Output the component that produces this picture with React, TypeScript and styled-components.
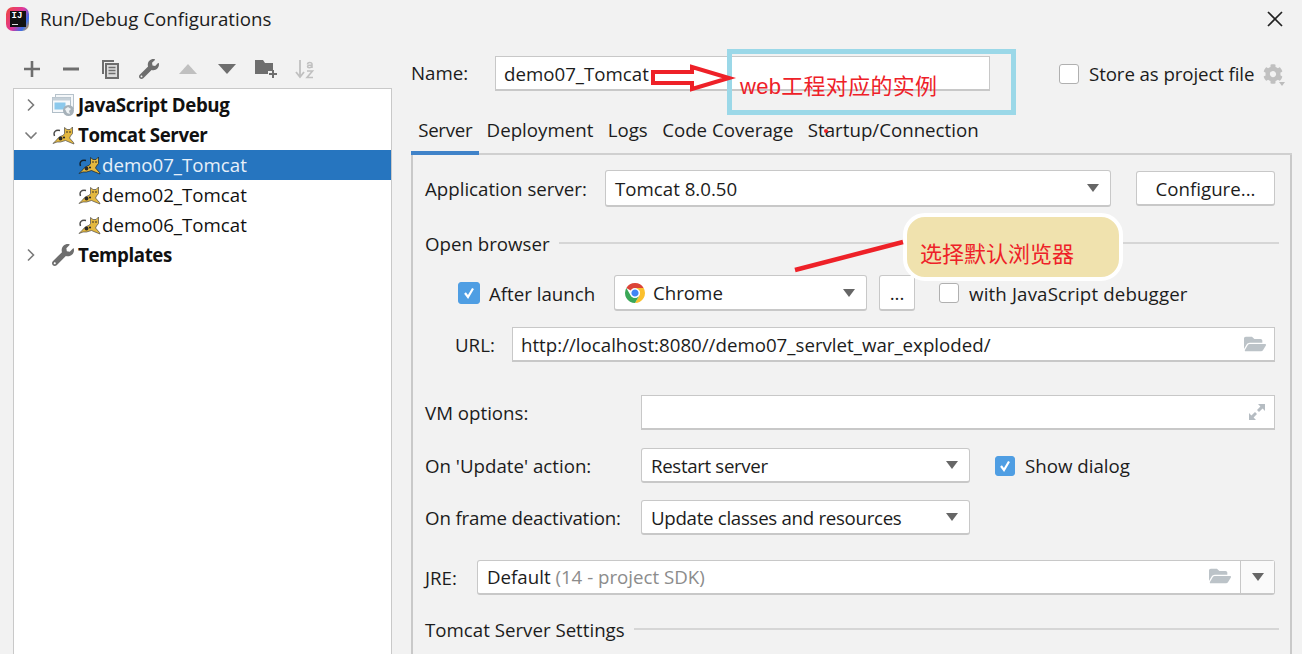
import React from "react";
import styled, { createGlobalStyle } from "styled-components";
import { FaWrench, FaCog, FaFolderOpen } from "react-icons/fa";

const Global = createGlobalStyle`
  html, body { margin: 0; padding: 0; background: #f2f2f2; }
  body { font-family: "Open Sans", "Noto Sans CJK SC", sans-serif; color: #1c1c1c; }
`;

const Dialog = styled.div`
  position: relative;
  width: 1302px;
  height: 654px;
  overflow: hidden;
  background: #f2f2f2;
  font-size: 18.7px;
`;
const TitleBar = styled.div`
  height: 38px;
  display: flex;
  align-items: center;
  padding: 0 19px 0 6px;
  box-sizing: border-box;
`;
const Logo = styled.div`
  width: 23px;
  height: 24px;
  border-radius: 7px;
  background: linear-gradient(120deg, #f04a3a 0%, #e0359a 50%, #3a6fe8 78%, #f5a623 100%);
  display: flex;
  align-items: center;
  justify-content: center;
`;
const LogoInner = styled.div`
  width: 16px;
  height: 16px;
  background: #111;
  color: #fff;
  font: bold 9px/11px "Liberation Mono", monospace;
  padding-left: 2px;
  box-sizing: border-box;
  position: relative;
  &::after {
    content: "";
    position: absolute;
    left: 2px;
    bottom: 2px;
    width: 6px;
    height: 1px;
    background: #ddd;
  }
`;
const Title = styled.div`
  margin-left: 11px;
  flex: 1;
  position: relative;
  top: -1px;
`;
const Main = styled.div`
  display: flex;
  height: 616px;
`;
const Sidebar = styled.div`
  width: 392px;
  padding-left: 13px;
  box-sizing: border-box;
  display: flex;
  flex-direction: column;
  flex: none;
`;
const Toolbar = styled.div`
  height: 32px;
  margin: 15px 0 3px -1px;
  display: flex;
  align-items: center;
  color: #6e6e6e;
`;
const ToolIcon = styled.span<{ $dim?: boolean }>`
  width: 39px;
  display: flex;
  justify-content: center;
  align-items: center;
  color: ${(p) => (p.$dim ? "#c0c0c0" : "#6e6e6e")};
  flex: none;
`;
const Tree = styled.div`
  flex: 1;
  background: #fff;
  border: 1px solid #c9c9c9;
  border-bottom: none;
  padding-top: 1px;
`;
const TreeRow = styled.div<{ $indent: number; $selected?: boolean; $bold?: boolean }>`
  height: 30px;
  box-sizing: border-box;
  padding-bottom: 1px;
  display: flex;
  align-items: center;
  padding-left: ${(p) => p.$indent}px;
  background: ${(p) => (p.$selected ? "#2675bf" : "transparent")};
  color: ${(p) => (p.$selected ? "#e6f0fa" : "#111")};
  font-weight: ${(p) => (p.$bold ? 700 : 400)};
  letter-spacing: ${(p) => (p.$bold ? "-0.4px" : "0")};
`;
const Twisty = styled.span`
  width: 29px;
  flex: none;
  display: flex;
`;
const RowIcon = styled.span<{ $w: number }>`
  width: ${(p) => p.$w}px;
  flex: none;
  display: flex;
  align-items: center;
`;
const Right = styled.div`
  flex: 1;
  padding: 18px 10px 0 19px;
  min-width: 0;
`;
const NameRow = styled.div`
  display: flex;
  align-items: center;
  height: 35px;
`;
const NameLabel = styled.div`
  width: 84px;
  padding-bottom: 2px;
  box-sizing: border-box;
`;
const TextField = styled.div<{ $w?: number }>`
  height: 100%;
  box-sizing: border-box;
  ${(p) => (p.$w ? `width: ${p.$w}px; flex: none;` : "flex: 1;")}
  background: #fff;
  border: 1px solid #c8c8c8;
  border-bottom: 2px solid #c8c8c8;
  padding: 0 8px;
  display: flex;
  align-items: center;
  justify-content: space-between;
  color: #1c1c1c;
`;
const Check = styled.span<{ $on?: boolean; $size?: number }>`
  width: ${(p) => p.$size ?? 20}px;
  height: ${(p) => p.$size ?? 20}px;
  flex: none;
  box-sizing: border-box;
  border-radius: 3px;
  background: ${(p) => (p.$on ? "#4f9ee3" : "#fff")};
  border: 1px solid ${(p) => (p.$on ? "#4f9ee3" : "#b0b0b0")};
  display: flex;
  align-items: center;
  justify-content: center;
`;
const CheckLabel = styled.label<{ $left: number; $gap: number; $spacing?: number }>`
  display: flex;
  align-items: center;
  gap: ${(p) => p.$gap}px;
  margin-left: ${(p) => p.$left}px;
  letter-spacing: ${(p) => p.$spacing ?? 0}px;
  white-space: nowrap;
`;
const GearWrap = styled.span`
  margin-left: 9px;
  color: #c0c0c0;
  display: flex;
  position: relative;
`;
const GearCaret = styled.span`
  position: absolute;
  right: -2px;
  bottom: -2px;
  width: 0;
  height: 0;
  border-left: 3px solid transparent;
  border-right: 3px solid transparent;
  border-top: 4px solid #bcbcbc;
`;
const Tabs = styled.div`
  margin-top: 19px;
  height: 45px;
  display: flex;
  box-sizing: border-box;
  border-bottom: 2px solid #d0d0d0;
`;
const Tab = styled.div<{ $active?: boolean }>`
  padding: 0 7.2px;
  height: 45px;
  box-sizing: border-box;
  line-height: 40px;
  border-bottom: 4px solid ${(p) => (p.$active ? "#4083c9" : "transparent")};
  letter-spacing: ${(p) => (p.$active ? "-0.3px" : "0")};
  white-space: nowrap;
`;
const Panel = styled.div`
  border-left: 2px solid #c9c9c9;
  border-right: 2px solid #c9c9c9;
  padding: 15px 15px 0 12px;
  height: 520px;
  box-sizing: border-box;
`;
const Row = styled.div<{ $top: number; $h: number; $pad?: number }>`
  display: flex;
  align-items: center;
  margin-top: ${(p) => p.$top}px;
  height: ${(p) => p.$h}px;
  padding-left: ${(p) => p.$pad ?? 0}px;
`;
const FieldLabel = styled.div<{ $w: number; $left?: number; $spacing?: number }>`
  width: ${(p) => p.$w}px;
  margin-left: ${(p) => p.$left ?? 0}px;
  letter-spacing: ${(p) => p.$spacing ?? 0}px;
  flex: none;
  white-space: nowrap;
`;
const Select = styled.div<{ $w?: number }>`
  height: 100%;
  box-sizing: border-box;
  ${(p) => (p.$w ? `width: ${p.$w}px; flex: none;` : "flex: 1;")}
  background: #fff;
  border: 1px solid #c8c8c8;
  border-bottom: 2px solid #c8c8c8;
  border-radius: 3px;
  padding: 0 11px 0 9px;
  display: flex;
  align-items: center;
  justify-content: space-between;
`;
const SelectText = styled.span<{ $spacing?: number }>`
  display: flex;
  align-items: center;
  gap: 7px;
  letter-spacing: ${(p) => p.$spacing ?? 0}px;
  white-space: nowrap;
`;
const Caret = styled.span`
  width: 0;
  height: 0;
  border-left: 6px solid transparent;
  border-right: 6px solid transparent;
  border-top: 8px solid #666;
`;
const Button = styled.div<{ $w: number; $left: number; $h?: number }>`
  width: ${(p) => p.$w}px;
  height: ${(p) => p.$h ?? 100}%;
  flex: none;
  margin-left: ${(p) => p.$left}px;
  box-sizing: border-box;
  background: #fff;
  border: 1px solid #c8c8c8;
  border-bottom: 2px solid #c8c8c8;
  border-radius: 3px;
  display: flex;
  align-items: center;
  justify-content: center;
`;
const Separator = styled.div`
  flex: 1;
  height: 2px;
  background: #d6d6d6;
  margin: 0 -4px 0 9px;
`;
const Muted = styled.span`
  color: #8c8c8c;
`;
const JreField = styled.div`
  flex: 1;
  height: 100%;
  display: flex;
  box-sizing: border-box;
  background: #fff;
  border: 1px solid #c8c8c8;
  border-bottom: 2px solid #c8c8c8;
  border-radius: 3px;
`;
const JreMain = styled.div`
  flex: 1;
  padding: 0 9px;
  display: flex;
  align-items: center;
  justify-content: space-between;
  position: relative;
  top: -1px;
`;
const JreArrow = styled.div`
  width: 33px;
  border-left: 1px solid #c8c8c8;
  background: #fafafa;
  display: flex;
  align-items: center;
  justify-content: center;
`;
const Overlay = styled.div`
  position: absolute;
  inset: 0;
  pointer-events: none;
`;
const BlueBox = styled.div`
  position: absolute;
  left: 727px;
  top: 49px;
  width: 289px;
  height: 66px;
  box-sizing: border-box;
  border: 5px solid #9bd8e8;
`;
const RedNote = styled.div`
  position: absolute;
  font-family: "Liberation Sans", "Noto Sans CJK SC", sans-serif;
  font-size: 22px;
  line-height: 28px;
  color: #ee2128;
  white-space: nowrap;
`;
const WebNote = styled(RedNote)`
  left: 740px;
  top: 73px;
  letter-spacing: 0.3px;
`;
const Bubble = styled.div`
  position: absolute;
  left: 903px;
  top: 213px;
  width: 220px;
  height: 68px;
  box-sizing: border-box;
  background: #f0e2ae;
  border: 4px solid #fff;
  border-radius: 22px;
`;
const BrowserNote = styled(RedNote)`
  left: 920px;
  top: 241px;
`;
const Drawing = styled.svg`
  position: absolute;
  left: 0;
  top: 0;
`;

const Chevron = ({ open }: { open?: boolean }) => (
  <svg width="16" height="16" viewBox="0 0 16 16" fill="none" stroke="#7a7a7a" strokeWidth="1.6">
    {open ? <path d="M2.5 5.5 L8 11 L13.5 5.5" /> : <path d="M5 2.5 L10.5 8 L5 13.5" />}
  </svg>
);

const Tomcat = ({ dark }: { dark?: boolean }) => {
  const ink = dark ? "#12202c" : "#4a4a4a";
  return (
    <svg width="23" height="20" viewBox="0 0 23 20">
      <path d="M2.5 11 C1 7 3.5 4.5 8 5.5" fill="none" stroke={ink} strokeWidth="1.4" />
      <path
        d="M1 18.5 L4.5 15 C6 12.5 8.5 11 11 10.5 L12.5 8.5 L12.5 2.5 L15 4.5 L18 4.5 L20.5 2 L20.5 8.5 L18.5 11 L17.5 13 L21.5 17.5 L22 19 L17 17 L13.5 15.5 L8.5 17 L5 17 Z"
        fill="#e4b83f"
        stroke={ink}
        strokeWidth="0.7"
      />
      <circle cx="15" cy="7" r="0.8" fill="#222" />
      <circle cx="18" cy="7" r="0.8" fill="#222" />
      <circle cx="8.5" cy="13.5" r="1.9" fill="#2a2a2a" />
      <circle cx="12" cy="12.5" r="1.1" fill="#2a2a2a" />
    </svg>
  );
};

const JsDebug = () => (
  <svg width="22" height="22" viewBox="0 0 22 22">
    <rect x="3.5" y="0.5" width="18" height="14" fill="#f4f7f9" stroke="#b6c2cb" />
    <rect x="0.5" y="3.5" width="18" height="15" fill="#f7f9fb" stroke="#b0bec8" />
    <rect x="0.5" y="3.5" width="18" height="3" fill="#c5d0d8" />
    <rect x="2.5" y="8.5" width="11" height="7" fill="#8cc9ec" />
    <circle cx="16.5" cy="16.5" r="5.5" fill="#a6b1b9" />
    <path d="M13 15 L16 13 L19 15 L17 17 L18 20 L15 19 Z" fill="#eef2f4" />
  </svg>
);

const Copy = () => (
  <svg width="18" height="20" viewBox="0 0 18 20">
    <path d="M1 1 H13 V3 H3 V15 H1 Z" fill="#6e6e6e" />
    <path d="M5 5 H17 V19 H5 Z" fill="#dcdcdc" stroke="#6e6e6e" strokeWidth="2" />
    <path d="M7.5 8.5 H14.5 M7.5 11.5 H14.5 M7.5 14.5 H14.5" stroke="#6e6e6e" strokeWidth="1.6" />
  </svg>
);

const Chrome = () => (
  <svg width="22" height="22" viewBox="0 0 22 22">
    <path d="M11 1 A10 10 0 0 1 19.66 6 L11 6 A5 5 0 0 0 6.67 8.5 L2.34 6 A10 10 0 0 1 11 1 Z" fill="#db4437" />
    <path d="M19.66 6 A10 10 0 0 1 11 21 L15.33 13.5 A5 5 0 0 0 15.33 8.5 Z M15.33 8.5 L11 6 L19.66 6 Z" fill="#fbc02d" />
    <path d="M2.34 6 A10 10 0 0 0 11 21 L15.33 13.5 A5 5 0 0 1 6.67 13.5 Z" fill="#3aa757" />
    <circle cx="11" cy="11" r="4.2" fill="#4285f4" stroke="#fff" strokeWidth="1.2" />
  </svg>
);

const Tick = ({ size = 14 }: { size?: number }) => (
  <svg width={size} height={size} viewBox="0 0 14 14" fill="none" stroke="#fff" strokeWidth="2.2">
    <path d="M3 7 L6 11 L11 2.5" />
  </svg>
);

const Expand = () => (
  <svg width="18" height="18" viewBox="0 0 18 18" fill="#b5bcc2">
    <path d="M10 1 H17 V8 L14.6 5.6 L11 9 L9 7 L12.4 3.4 Z" />
    <path d="M1 10 L3.4 12.4 L7 9 L9 11 L5.6 14.6 L8 17 H1 Z" />
  </svg>
);

const tree = [
  { label: "JavaScript Debug", indent: 9, twisty: "closed", bold: true, icon: <JsDebug />, w: 26 },
  { label: "Tomcat Server", indent: 9, twisty: "open", bold: true, icon: <Tomcat />, w: 26 },
  { label: "demo07_Tomcat", indent: 64, selected: true, icon: <Tomcat dark />, w: 24 },
  { label: "demo02_Tomcat", indent: 64, icon: <Tomcat />, w: 24 },
  { label: "demo06_Tomcat", indent: 64, icon: <Tomcat />, w: 24 },
  { label: "Templates", indent: 9, twisty: "closed", bold: true, icon: <FaWrench size={22} color="#6e6e6e" />, w: 26 },
];

const tabs = ["Server", "Deployment", "Logs", "Code Coverage", "Startup/Connection"];

export default function App() {
  return (
    <Dialog>
      <Global />
      <TitleBar>
        <Logo>
          <LogoInner>IJ</LogoInner>
        </Logo>
        <Title>Run/Debug Configurations</Title>
        <svg width="16" height="16" viewBox="0 0 16 16" stroke="#222" strokeWidth="1.7">
          <path d="M1 1 L15 15 M15 1 L1 15" />
        </svg>
      </TitleBar>
      <Main>
        <Sidebar>
          <Toolbar>
            <ToolIcon>
              <svg width="16" height="16" viewBox="0 0 16 16" fill="#6e6e6e">
                <path d="M6.7 0 H9.3 V6.7 H16 V9.3 H9.3 V16 H6.7 V9.3 H0 V6.7 H6.7 Z" />
              </svg>
            </ToolIcon>
            <ToolIcon>
              <svg width="16" height="4" viewBox="0 0 16 4" fill="#6e6e6e">
                <rect width="16" height="3" y="0.5" />
              </svg>
            </ToolIcon>
            <ToolIcon>
              <Copy />
            </ToolIcon>
            <ToolIcon>
              <FaWrench size={20} />
            </ToolIcon>
            <ToolIcon $dim>
              <svg width="18" height="10" viewBox="0 0 18 10" fill="currentColor">
                <path d="M9 0 L18 10 H0 Z" />
              </svg>
            </ToolIcon>
            <ToolIcon>
              <svg width="18" height="10" viewBox="0 0 18 10" fill="currentColor">
                <path d="M0 0 H18 L9 10 Z" />
              </svg>
            </ToolIcon>
            <ToolIcon>
              <svg width="22" height="20" viewBox="0 0 22 20" fill="currentColor">
                <path d="M0 1 H8 L10 4 H18 V12 H13 V15 H0 Z" />
                <path d="M17 11 H19 V14 H22 V16 H19 V19 H17 V16 H14 V14 H17 Z" />
              </svg>
            </ToolIcon>
            <ToolIcon $dim>
              <svg width="20" height="20" viewBox="0 0 20 20" fill="none" stroke="currentColor" strokeWidth="1.8">
                <path d="M5 1 V17 M1 13 L5 18 L9 13" />
                <path d="M12.5 5.5 C12.5 3 17 3 17 5 V9 M17 6 C14 6 12.5 6.5 12.5 7.5 C12.5 9 16 9 17 7.5" strokeWidth="1.5" />
                <path d="M12 12 H17.5 L12 18.5 H18" strokeWidth="1.6" />
              </svg>
            </ToolIcon>
          </Toolbar>
          <Tree>
            {tree.map((n) => (
              <TreeRow key={n.label} $indent={n.indent} $selected={n.selected} $bold={n.bold}>
                {n.twisty && (
                  <Twisty>
                    <Chevron open={n.twisty === "open"} />
                  </Twisty>
                )}
                <RowIcon $w={n.w}>{n.icon}</RowIcon>
                {n.label}
              </TreeRow>
            ))}
          </Tree>
        </Sidebar>
        <Right>
          <NameRow>
            <NameLabel>Name:</NameLabel>
            <TextField $w={495}>demo07_Tomcat</TextField>
            <CheckLabel $left={69} $gap={10} $spacing={-0.1}>
              <Check />
              Store as project file
            </CheckLabel>
            <GearWrap>
              <FaCog size={20} />
              <GearCaret />
            </GearWrap>
          </NameRow>
          <Tabs>
            {tabs.map((t, i) => (
              <Tab key={t} $active={i === 0}>
                {t}
              </Tab>
            ))}
          </Tabs>
          <Panel>
            <Row $top={0} $h={37}>
              <FieldLabel $w={180}>Application server:</FieldLabel>
              <Select>
                <SelectText>Tomcat 8.0.50</SelectText>
                <Caret />
              </Select>
              <Button $w={139} $left={25} $h={92}>
                Configure...
              </Button>
            </Row>
            <Row $top={24} $h={24}>
              Open browser
              <Separator />
            </Row>
            <Row $top={20} $h={36} $pad={33}>
              <Check $on $size={22}>
                <Tick />
              </Check>
              <FieldLabel $w={125} $left={9}>
                After launch
              </FieldLabel>
              <Select $w={253}>
                <SelectText>
                  <Chrome />
                  Chrome
                </SelectText>
                <Caret />
              </Select>
              <Button $w={36} $left={12}>
                ...
              </Button>
              <CheckLabel $left={24} $gap={10} $spacing={0.15}>
                <Check />
                with JavaScript debugger
              </CheckLabel>
            </Row>
            <Row $top={16} $h={35} $pad={30}>
              <FieldLabel $w={57}>URL:</FieldLabel>
              <TextField>
                http://localhost:8080//demo07_servlet_war_exploded/
                <FaFolderOpen size={22} color="#bcc3c8" />
              </TextField>
            </Row>
            <Row $top={33} $h={35}>
              <FieldLabel $w={216}>VM options:</FieldLabel>
              <TextField>
                <span />
                <Expand />
              </TextField>
            </Row>
            <Row $top={18} $h={35}>
              <FieldLabel $w={216}>On 'Update' action:</FieldLabel>
              <Select $w={329}>
                <SelectText $spacing={-0.35}>Restart server</SelectText>
                <Caret />
              </Select>
              <CheckLabel $left={25} $gap={10}>
                <Check $on $size={20}>
                  <Tick />
                </Check>
                Show dialog
              </CheckLabel>
            </Row>
            <Row $top={17} $h={35}>
              <FieldLabel $w={216} $spacing={-0.15}>
                On frame deactivation:
              </FieldLabel>
              <Select $w={329}>
                <SelectText $spacing={-0.3}>Update classes and resources</SelectText>
                <Caret />
              </Select>
            </Row>
            <Row $top={25} $h={35}>
              <FieldLabel $w={52}>JRE:</FieldLabel>
              <JreField>
                <JreMain>
                  <span>
                    Default <Muted>(14 - project SDK)</Muted>
                  </span>
                  <FaFolderOpen size={22} color="#bcc3c8" />
                </JreMain>
                <JreArrow>
                  <Caret />
                </JreArrow>
              </JreField>
            </Row>
            <Row $top={22} $h={24}>
              Tomcat Server Settings
              <Separator />
            </Row>
          </Panel>
        </Right>
      </Main>
      <Overlay>
        <BlueBox />
        <WebNote>web工程对应的实例</WebNote>
        <Bubble />
        <BrowserNote>选择默认浏览器</BrowserNote>
        <Drawing width="1302" height="654">
          <path d="M653 72 H692 V67 L729 78 L692 89 V83 H653 Z" fill="none" stroke="#ee2128" strokeWidth="4" />
          <path d="M795 270 L903 242" stroke="#ee2128" strokeWidth="4.5" />
          <circle cx="826" cy="131" r="2" fill="#ee2128" />
        </Drawing>
      </Overlay>
    </Dialog>
  );
}
